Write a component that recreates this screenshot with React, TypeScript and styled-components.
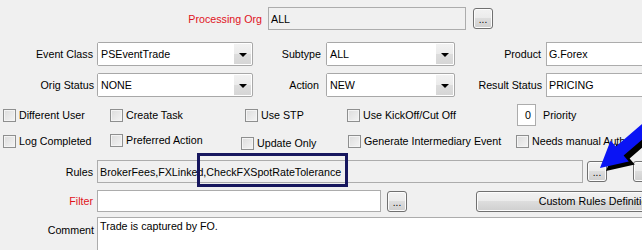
import styled, { createGlobalStyle } from 'styled-components';

const GlobalStyle = createGlobalStyle`
  html, body {
    margin: 0;
    padding: 0;
    background: #f0f0f0;
    overflow: hidden;
  }
  body {
    font-family: 'Liberation Sans', Arial, sans-serif;
    font-size: 10.7px;
    color: #000;
  }
`;

const Form = styled.div`
  position: relative;
  width: 642px;
  height: 250px;
  overflow: hidden;
  background: #f0f0f0;
  padding-top: 7px;
  box-sizing: border-box;
`;

const Row = styled.div<{ $top?: number; $h: number; $pl?: number }>`
  display: flex;
  align-items: center;
  height: ${p => p.$h}px;
  margin-top: ${p => p.$top ?? 0}px;
  padding-left: ${p => p.$pl ?? 0}px;
  white-space: nowrap;
`;

const Label = styled.div<{ $w: number; $red?: boolean; $pr?: number }>`
  flex-shrink: 0;
  width: ${p => p.$w}px;
  padding-right: ${p => p.$pr ?? 4}px;
  box-sizing: border-box;
  text-align: right;
  color: ${p => (p.$red ? '#e0131c' : '#000')};
`;

const TextField = styled.div<{ $w: number; $h?: number; $disabled?: boolean }>`
  flex-shrink: 0;
  width: ${p => p.$w}px;
  height: ${p => p.$h ?? 23}px;
  box-sizing: border-box;
  border: 1px solid #acacac;
  background: ${p => (p.$disabled ? '#f0f0f0' : '#fff')};
  padding-left: 2px;
  display: flex;
  align-items: center;
  overflow: hidden;
`;

const Combo = styled.div<{ $w: number }>`
  flex-shrink: 0;
  width: ${p => p.$w}px;
  height: 24px;
  box-sizing: border-box;
  border: 1px solid #a8a8a8;
  border-radius: 2px;
  background: #fff;
  display: flex;
  align-items: stretch;
`;

const ComboText = styled.div`
  flex: 1;
  display: flex;
  align-items: center;
  padding-left: 2px;
  border: 1px solid #fff;
`;

const ComboArrow = styled.div`
  width: 17px;
  margin: 1px;
  background: linear-gradient(#f2f2f2 0%, #ebebeb 50%, #dddddd 51%, #d6d6d6 100%);
  display: flex;
  align-items: center;
  justify-content: center;

  &::after {
    content: '';
    border-left: 4px solid transparent;
    border-right: 4px solid transparent;
    border-top: 4px solid #000;
    margin-top: 1px;
  }
`;

const Button = styled.div<{ $w: number; $ml?: number }>`
  flex-shrink: 0;
  width: ${p => p.$w}px;
  height: 21px;
  margin-left: ${p => p.$ml ?? 0}px;
  box-sizing: border-box;
  border: 1px solid #707070;
  border-radius: 3px;
  background: linear-gradient(#f2f2f2 0%, #ebebeb 48%, #dddddd 50%, #cfcfcf 100%);
  box-shadow: inset 0 0 0 1px #fcfcfc;
  display: flex;
  align-items: center;
  justify-content: center;
`;

const Dots = styled.span`
  font-size: 10px;
  margin-top: 2px;
`;

const CheckItem = styled.div<{ $w?: number; $dy?: number }>`
  flex-shrink: 0;
  width: ${p => (p.$w ? `${p.$w}px` : 'auto')};
  display: flex;
  align-items: center;
  gap: 3px;
  position: relative;
  top: ${p => p.$dy ?? 0}px;
`;

const Box = styled.span`
  width: 13px;
  height: 13px;
  box-sizing: border-box;
  border: 1px solid #8e8f8f;
  background: linear-gradient(135deg, #dcdcdc, #f4f4f4);
  box-shadow: inset 0 0 0 1px #f4f4f4;
  flex-shrink: 0;
`;

const NumberField = styled.div`
  width: 19px;
  height: 22px;
  box-sizing: border-box;
  border: 1px solid #acacac;
  background: #fff;
  display: flex;
  align-items: center;
  justify-content: flex-end;
  padding-right: 4px;
  margin-right: 4px;
`;

const CommentRow = styled.div`
  display: flex;
  align-items: flex-start;
  margin-top: 5px;
`;

const CommentLabel = styled(Label)`
  padding-top: 7px;
`;

const TextArea = styled.div`
  width: 600px;
  height: 45px;
  box-sizing: border-box;
  border: 1px solid #acacac;
  background: #fff;
  padding: 2px 2px;
  flex-shrink: 0;
`;

const Highlight = styled.div`
  position: absolute;
  left: 197px;
  top: 153px;
  width: 151px;
  height: 34px;
  box-sizing: border-box;
  border: 3px solid #17175e;
  pointer-events: none;
`;

const ArrowOverlay = styled.svg`
  position: absolute;
  left: 590px;
  top: 118px;
`;

const arrowPts = '10,50 20.6,22.4 25.8,28.5 63,-3.4 70.8,5.6 33.6,37.5 38.8,43.6';

export default function App() {
  return (
    <Form>
      <GlobalStyle />
      <Row $h={23}>
        <Label $w={268} $pr={6} $red>Processing Org</Label>
        <TextField $w={198} $disabled>ALL</TextField>
        <Button $w={20} $ml={7}><Dots>...</Dots></Button>
      </Row>

      <Row $h={24} $top={12}>
        <Label $w={97}>Event Class</Label>
        <Combo $w={156}><ComboText>PSEventTrade</ComboText><ComboArrow /></Combo>
        <Label $w={73} $pr={5}>Subtype</Label>
        <Combo $w={129}><ComboText>ALL</ComboText><ComboArrow /></Combo>
        <Label $w={91} $pr={5}>Product</Label>
        <TextField $w={120} $h={24}>G.Forex</TextField>
      </Row>

      <Row $h={24} $top={7}>
        <Label $w={97} $pr={3}>Orig Status</Label>
        <Combo $w={156}><ComboText>NONE</ComboText><ComboArrow /></Combo>
        <Label $w={73} $pr={7}>Action</Label>
        <Combo $w={129}><ComboText>NEW</ComboText><ComboArrow /></Combo>
        <Label $w={91} $pr={4}>Result Status</Label>
        <TextField $w={120} $h={24}>PRICING</TextField>
      </Row>

      <Row $h={22} $top={7} $pl={3}>
        <CheckItem $w={107}><Box />Different User</CheckItem>
        <CheckItem $w={135}><Box />Create Task</CheckItem>
        <CheckItem $w={102}><Box />Use STP</CheckItem>
        <CheckItem $w={170}><Box />Use KickOff/Cut Off</CheckItem>
        <CheckItem><NumberField>0</NumberField>Priority</CheckItem>
      </Row>

      <Row $h={16} $top={7} $pl={3}>
        <CheckItem $w={107}><Box />Log Completed</CheckItem>
        <CheckItem $w={131} $dy={-1}><Box />Preferred Action</CheckItem>
        <CheckItem $w={107} $dy={2}><Box />Update Only</CheckItem>
        <CheckItem $w={168}><Box />Generate Intermediary Event</CheckItem>
        <CheckItem><Box />Needs manual Authorization</CheckItem>
      </Row>

      <Row $h={23} $top={11}>
        <Label $w={97}>Rules</Label>
        <TextField $w={486} $disabled>BrokerFees,FXLinked,CheckFXSpotRateTolerance</TextField>
        <Button $w={20} $ml={4}><Dots>...</Dots></Button>
        <Button $w={30} $ml={26} />
      </Row>

      <Row $h={22} $top={7}>
        <Label $w={97} $red>Filter</Label>
        <TextField $w={284} $h={22} />
        <Button $w={20} $ml={6}><Dots>...</Dots></Button>
        <Button $w={240} $ml={69}>Custom Rules Definition</Button>
      </Row>

      <CommentRow>
        <CommentLabel $w={97} $pr={3}>Comment</CommentLabel>
        <TextArea>Trade is captured by FO.</TextArea>
      </CommentRow>

      <Highlight />
      <ArrowOverlay width="52" height="64" viewBox="0 0 52 64">
        <polygon points={arrowPts} fill="#000" transform="translate(6,3)" />
        <polygon points={arrowPts} fill="#0a14f5" />
      </ArrowOverlay>
    </Form>
  );
}
